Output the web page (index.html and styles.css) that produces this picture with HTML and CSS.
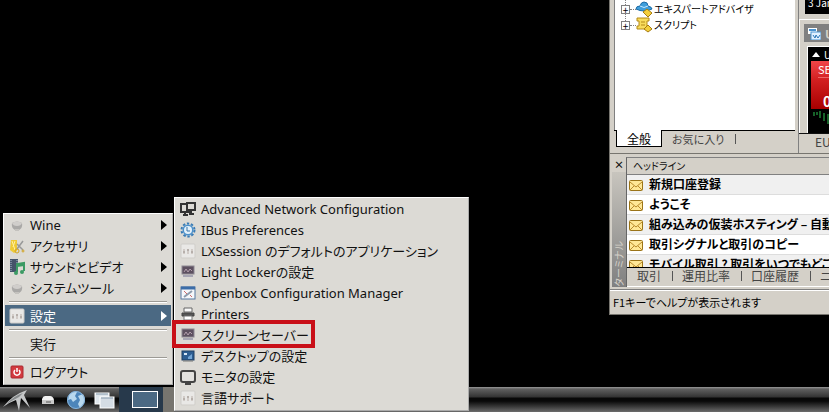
FILE: index.html
```html
<!DOCTYPE html>
<html lang="ja">
<head>
  <meta charset="utf-8">
  <title>デスクトップ</title>
  <link rel="stylesheet" href="styles.css">
</head>
<body>
  <svg class="defs" aria-hidden="true">
    <symbol id="wine" viewBox="0 0 16 16">
      <path d="M3 6Q8 3 13 6Q14 11 10 13H6Q2 11 3 6Z" fill="#aaa9a7"/>
      <path d="M3 6Q8 3 13 6Q12 9 8 9Q4 9 3 6Z" fill="#d0cecb"/>
      <path d="M6 12H10V14H6Z" fill="#c4c2be"/>
    </symbol>
    <symbol id="plain" viewBox="0 0 16 16">
      <rect x="1" y="1" width="14" height="14" rx="1" fill="#e9e8e6" stroke="#cfcdc9"/>
      <path d="M4 6V11M8 6V11M12 6V11" stroke="#b9aea8"/>
      <path d="M3 9H5M7 7H9M11 9H13" stroke="#9c948f"/>
    </symbol>
    <symbol id="screen" viewBox="0 0 16 16">
      <rect x="2" y="2" width="12" height="8" fill="#5d5060" stroke="#8d8792"/>
      <path d="M4 8L6 5L8 8L10 5L12 7" stroke="#b4a0ae" fill="none"/>
      <path d="M3 12H13" stroke="#a8a6b4" stroke-width="2"/>
    </symbol>
    <symbol id="mail" viewBox="0 0 14 11">
      <rect x=".5" y=".5" width="13" height="10" rx="1" fill="#ffe795" stroke="#9b7418"/>
      <path d="M1 2L7 7L13 2M1 10L5 6M13 10L9 6" fill="none" stroke="#b98a2a"/>
    </symbol>
  </svg>

  <main class="desktop">
    <section class="app">
      <div class="app-top">
        <div class="navigator">
          <ul class="tree">
            <li>
              <button type="button" class="expand" aria-label="展開">+</button>
              <svg class="tree-icon" viewBox="0 0 18 16">
                <path d="M1 8Q1 5 5 5Q6 1 9 1Q13 1 13 5Q17 6 17 8Q9 12 1 8Z" fill="#3f9fdc" stroke="#1b6ba6"/>
                <path d="M5 5Q9 8 13 5" fill="none" stroke="#c5e8ff"/>
                <path d="M8 11L12 8L17 12L13 16Z" fill="#f4cf3c" stroke="#a77c10"/>
              </svg>
              <span>エキスパートアドバイザ</span>
            </li>
            <li>
              <button type="button" class="expand" aria-label="展開">+</button>
              <svg class="tree-icon" viewBox="0 0 18 16">
                <path d="M2 1H14V4H12V9H14V12H2V9H4V4H2Z" fill="#f8dc5c" stroke="#b58a18"/>
                <path d="M6 5H10M6 8H10" stroke="#b58a18"/>
                <path d="M9 12L13 8L17 12L13 15Z" fill="#f4cf3c" stroke="#a77c10"/>
              </svg>
              <span>スクリプト</span>
            </li>
          </ul>
          <nav class="tabs">
            <button type="button" class="tab active">全般</button>
            <button type="button" class="tab">お気に入り</button>
          </nav>
        </div>
        <div class="charts">
          <div class="chart-upper">3 Jan 2017</div>
          <div class="chart-window">
            <header class="chart-title">
              <svg class="chart-icon" viewBox="0 0 13 13">
                <rect x="0" y="1" width="9" height="6" fill="#fff"/>
                <path d="M1 3H8" stroke="#4b93cf" stroke-width="2"/>
                <rect x="3" y="5" width="10" height="8" fill="#e2f1ff" stroke="#4b93cf"/>
                <path d="M5 8L7 11L8 8L10 11L12 8" fill="none" stroke="#2d77b8"/>
              </svg>
              <b>USDCHF,H4</b>
            </header>
            <div class="chart">
              <div class="symbol-name"><svg viewBox="0 0 8 5"><path d="M0 5L4 0L8 5Z" fill="#fff"/></svg>USDCHF</div>
              <button type="button" class="sell"><span>SELL</span><b>0</b></button>
              <svg class="bars" viewBox="0 0 20 22"><path d="M2 3V7M5 3V6M8 2V9M12 4V12M16 5V15" stroke="#2fc452"/></svg>
            </div>
          </div>
          <nav class="chart-tabs"><button type="button">EURUSD,H4</button></nav>
        </div>
      </div>

      <div class="terminal">
        <div class="handle">
          <button type="button" class="close" aria-label="閉じる">×</button>
          <div class="grip"><span>ターミナル</span></div>
        </div>
        <div class="terminal-body">
          <div class="news">
            <table>
              <thead><tr><th>ヘッドライン</th></tr></thead>
              <tbody>
                <tr><td><svg><use href="#mail"/></svg>新規口座登録</td></tr>
                <tr><td><svg><use href="#mail"/></svg>ようこそ</td></tr>
                <tr><td><svg><use href="#mail"/></svg>組み込みの仮装ホスティング – 自動売買</td></tr>
                <tr><td><svg><use href="#mail"/></svg>取引シグナルと取引のコピー</td></tr>
                <tr><td><svg><use href="#mail"/></svg>モバイル取引 ? 取引をいつでもどこでも</td></tr>
              </tbody>
            </table>
          </div>
          <nav class="tabs bottom-tabs">
            <button type="button" class="tab">取引</button>
            <button type="button" class="tab">運用比率</button>
            <button type="button" class="tab">口座履歴</button>
            <button type="button" class="tab">ニュース</button>
          </nav>
        </div>
      </div>
      <footer class="status">F1キーでヘルプが表示されます</footer>
    </section>

    <nav class="menu main-menu">
      <button type="button" class="item more"><svg><use href="#wine"/></svg>Wine</button>
      <button type="button" class="item more">
        <svg viewBox="0 0 16 16">
          <path d="M2 2H8V13L5 15L1 12Z" fill="#efca35"/>
          <path d="M3 3L6 12M6 3L4 9" stroke="#fff0a0"/>
          <path d="M14 3L8 11M8 6L14 12" stroke="#999" stroke-width="1.5"/>
          <circle cx="8" cy="13" r="2" fill="none" stroke="#d2a31e"/>
          <circle cx="14" cy="13" r="1" fill="none" stroke="#d2a31e"/>
        </svg>アクセサリ
      </button>
      <button type="button" class="item more">
        <svg viewBox="0 0 16 16">
          <rect x="1" y="0" width="8" height="13" fill="#44536a"/>
          <path d="M2 1V12M8 1V12" stroke="#a9b9cc" stroke-dasharray="1 1"/>
          <path d="M8 13V5L15 4V12M8 7L15 6" fill="none" stroke="#3b9a64" stroke-width="2"/>
          <circle cx="7" cy="14" r="2" fill="#3b9a64"/>
          <circle cx="13" cy="13" r="2" fill="#3b9a64"/>
        </svg>サウンドとビデオ
      </button>
      <button type="button" class="item more"><svg><use href="#wine"/></svg>システムツール</button>
      <hr>
      <button type="button" class="item more selected"><svg><use href="#plain"/></svg>設定</button>
      <hr>
      <button type="button" class="item"><svg></svg>実行</button>
      <hr>
      <button type="button" class="item">
        <svg viewBox="0 0 16 16">
          <rect x="2" y="2" width="12" height="12" rx="1" fill="#d33a3f" stroke="#a92b31"/>
          <path d="M6 6A3 3 0 1 0 10 6M8 4V8" fill="none" stroke="#fff" stroke-width="1.5"/>
        </svg>ログアウト
      </button>
    </nav>

    <nav class="menu sub-menu">
      <button type="button" class="item">
        <svg viewBox="0 0 16 16">
          <path d="M9 10V11H1V3H6M3 14H8M5 11V14" fill="none" stroke="#333" stroke-width="2"/>
          <rect x="7" y="2" width="8" height="7" fill="#dcdad5" stroke="#333" stroke-width="2"/>
          <path d="M11 9V12M9 13H14" stroke="#333" stroke-width="2"/>
        </svg>Advanced Network Configuration
      </button>
      <button type="button" class="item">
        <svg viewBox="0 0 16 16">
          <circle cx="8" cy="8" r="6.5" fill="none" stroke="#397bb5" stroke-width="2" stroke-dasharray="2.4 1.7"/>
          <circle cx="8" cy="8" r="5.5" fill="#4d91cb"/>
          <circle cx="8" cy="8" r="4" fill="#e3f0fa"/>
          <path d="M7 5V9H10" fill="none" stroke="#3974a8"/>
        </svg>IBus Preferences
      </button>
      <button type="button" class="item"><svg><use href="#plain"/></svg>LXSession のデフォルトのアプリケーション</button>
      <button type="button" class="item"><svg><use href="#screen"/></svg>Light Lockerの設定</button>
      <button type="button" class="item">
        <svg viewBox="0 0 16 16">
          <rect x="1" y="2" width="14" height="12" fill="#f5f7fa" stroke="#55779f"/>
          <path d="M1 3H15" stroke="#3c6da8" stroke-width="3"/>
          <path d="M4 12L12 6" stroke="#8d9bac" stroke-width="2"/>
          <path d="M4 6L7 9M10 10L12 12" stroke="#cf6b6b"/>
        </svg>Openbox Configuration Manager
      </button>
      <button type="button" class="item">
        <svg viewBox="0 0 16 16">
          <path d="M4 2H12V6H4Z" fill="#f8f8f8" stroke="#666"/>
          <path d="M2 7H14V10H2Z" fill="#555" stroke="#444"/>
          <path d="M4 10H12V14H4Z" fill="#fff" stroke="#777"/>
        </svg>Printers
      </button>
      <button type="button" class="item marked"><svg><use href="#screen"/></svg>スクリーンセーバー</button>
      <button type="button" class="item">
        <svg viewBox="0 0 16 16">
          <rect x="2" y="3" width="12" height="9" fill="#2d5e92" stroke="#1f3f63"/>
          <path d="M4 5H7V7H4Z" fill="#d9e8f6"/>
          <path d="M8 9L12 6V11H8Z" fill="#73a5d5"/>
          <path d="M3 13H13" stroke="#777"/>
        </svg>デスクトップの設定
      </button>
      <button type="button" class="item">
        <svg viewBox="0 0 16 16">
          <rect x="1" y="2" width="14" height="11" rx="2" fill="#e2e1de" stroke="#444" stroke-width="2"/>
          <path d="M5 15H11" stroke="#444" stroke-width="2"/>
        </svg>モニタの設定
      </button>
      <button type="button" class="item"><svg><use href="#plain"/></svg>言語サポート</button>
    </nav>
  </main>

  <footer class="taskbar">
    <button type="button" class="launch start" aria-label="メニュー">
      <svg viewBox="0 0 30 24">
        <path d="M1 19Q10 7 25 2L22 7L28 20L19 10L17 23L14 12Q8 14 1 19Z" fill="#c5c7c8"/>
        <path d="M4 16Q12 8 21 5L17 9Z" fill="#85898b"/>
      </svg>
    </button>
    <button type="button" class="launch" aria-label="ファイルマネージャ">
      <svg viewBox="0 0 24 24"><path d="M6 11Q7 8 9 8H14Q17 8 18 12V16H6Z" fill="#f2f2f2"/><path d="M6 12H18V16H6Z" fill="#c9c9c9"/><path d="M10 14H15" stroke="#555"/></svg>
    </button>
    <button type="button" class="launch globe" aria-label="ウェブブラウザ">
      <svg viewBox="0 0 24 24"><circle cx="12" cy="12" r="9" fill="#4c85ba"/><path d="M5 7Q9 2 13 4L11 8L13 11L9 14L7 11L4 12ZM14 8L19 6Q22 11 20 15L16 20L14 16L16 12Z" fill="#b8d8ee"/><circle cx="12" cy="12" r="8.5" fill="none" stroke="#88b3d8"/></svg>
    </button>
    <button type="button" class="launch" aria-label="全ウィンドウを最小化">
      <svg viewBox="0 0 24 24"><rect x="3" y="5" width="14" height="11" fill="#dfe6ec" stroke="#fff"/><path d="M4 6H16" stroke="#8397a9"/><rect x="8" y="9" width="14" height="11" fill="#d4dce4" stroke="#fff"/><path d="M9 10H21" stroke="#8397a9"/></svg>
    </button>
    <button type="button" class="pager" aria-label="デスクトップ 1"><span></span></button>
    <div class="divider"></div>
  </footer>
</body>
</html>
```

FILE: styles.css
```css
*, *::before, *::after {
  box-sizing: border-box;
}
body {
  margin: 0;
  height: 100vh;
  display: flex;
  flex-direction: column;
  overflow: hidden;
  position: relative;
  background: #000;
  color: #111;
  font-family: "Noto Sans", "Noto Sans CJK JP", sans-serif;
  font-size: 13px;
  font-feature-settings: "palt";
}
button {
  margin: 0;
  padding: 0;
  border: 0;
  background: none;
  color: inherit;
  font: inherit;
  font-feature-settings: inherit;
  white-space: nowrap;
}
.defs {
  display: none;
}
.desktop {
  flex: 1;
  min-height: 0;
}

/* Trading window */
.app {
  position: absolute;
  left: 609px;
  right: 0;
  top: 0;
  display: flex;
  flex-direction: column;
  overflow: hidden;
  border-left: 1px solid #77756f;
  background: #d4d0c8;
  font-family: "Noto Sans CJK JP", sans-serif;
  font-size: 12px;
}
.app-top {
  display: flex;
  height: 154px;
  border-bottom: 1px solid #77756f;
}
.navigator {
  flex: 0 0 189px;
  display: flex;
  flex-direction: column;
  padding: 0 3px 5px 4px;
  border-right: 1px solid #808080;
}
.tree {
  flex: 1;
  margin: 0;
  padding: 0 0 0 6px;
  list-style: none;
  background: #fff;
  border-left: 1px solid #808080;
  border-right: 1px solid #fff;
}
.tree li {
  display: flex;
  align-items: center;
  height: 16px;
  line-height: 16px;
  white-space: nowrap;
  color: #000;
  font-size: 10px;
}
.tree li:first-child {
  margin-top: 1px;
}
.expand {
  position: relative;
  display: flex;
  align-items: center;
  justify-content: center;
  width: 9px;
  height: 9px;
  border: 1px solid #808080;
  line-height: 7px;
  font-size: 10px;
}
/* dotted branch lines */
.expand::before,
.expand::after {
  content: "";
  position: absolute;
}
.expand::before {
  left: 3px;
  bottom: 8px;
  height: 7px;
  border-left: 1px dotted #808080;
}
.expand::after {
  left: 8px;
  top: 3px;
  width: 6px;
  border-top: 1px dotted #808080;
}
.tree-icon {
  width: 18px;
  height: 16px;
  margin: 0 1px 0 5px;
}
.tabs {
  display: flex;
  height: 18px;
  border-top: 1px solid #000;
  color: #444;
}
.tab {
  display: flex;
  align-items: center;
  height: 15px;
  padding: 0 10px;
}
.tab.active {
  height: 17px;
  margin: -1px 0 0 2px;
  border: 1px solid #000;
  border-top: 0;
  background: #fff;
  color: #000;
}
.tab:not(.active)::after {
  content: "";
  height: 10px;
  margin-left: 11px;
  margin-right: -11px;
  border-right: 1px solid #555;
}
.navigator .tab:not(.active) {
  font-size: 11px;
}
.charts {
  flex: 1;
  min-width: 0;
  display: flex;
  flex-direction: column;
  overflow: hidden;
  white-space: nowrap;
}
.chart-upper {
  height: 14px;
  margin-left: 6px;
  padding-left: 3px;
  background: #000;
  color: #fff;
  font-size: 10px;
  line-height: 6px;
}
.chart-window {
  flex: 1;
  display: flex;
  flex-direction: column;
  margin-top: 5px;
  padding: 4px 0 0 4px;
  border-top: 1px solid #fff;
  border-left: 1px solid #fff;
}
.chart-title {
  display: flex;
  align-items: center;
  gap: 4px;
  height: 18px;
  padding-left: 4px;
  background: #808080;
  color: #d4d0c8;
}
.chart-icon {
  flex: none;
  width: 13px;
  height: 13px;
}
.chart {
  flex: 1;
  margin: 4px 0 0 3px;
  overflow: hidden;
  border-top: 1px solid #fff;
  border-left: 1px solid #fff;
  background: #000;
  color: #fff;
  font-size: 10px;
}
.symbol-name {
  display: flex;
  align-items: center;
  gap: 4px;
  height: 14px;
  padding-left: 4px;
}
.symbol-name svg {
  flex: none;
  width: 8px;
  height: 5px;
}
.sell {
  display: flex;
  flex-direction: column;
  justify-content: space-between;
  width: 80px;
  height: 48px;
  margin-left: 3px;
  padding: 0 10px 0 7px;
  background: linear-gradient(#f04548, #d21f20 40%, #a90000);
  color: #fff;
  text-align: left;
  font-size: 11px;
  line-height: 16px;
}
.sell span {
  border-bottom: 1px solid #e66;
}
.sell b {
  padding-left: 5px;
  font-size: 14px;
}
.bars {
  display: block;
  width: 20px;
  height: 22px;
  margin-left: 4px;
}
.chart-tabs {
  height: 20px;
  padding-left: 16px;
  border-top: 1px solid #111;
  color: #444;
  line-height: 16px;
}

.terminal {
  display: flex;
  height: 136px;
  padding: 3px 0 2px 2px;
  border-bottom: 1px solid #808080;
}
.handle {
  flex: 0 0 14px;
  display: flex;
  flex-direction: column;
}
.close {
  height: 15px;
  line-height: 14px;
  font-size: 10px;
  font-weight: 700;
}
.grip {
  flex: 1;
  display: flex;
  align-items: flex-end;
  background: linear-gradient(#c8c5be, #808080);
  color: #d4d0c8;
  font-size: 10px;
  line-height: 14px;
}
.grip span {
  writing-mode: vertical-rl;
  text-orientation: sideways;
  transform: rotate(180deg);
}
.terminal-body {
  flex: 1;
  min-width: 0;
  display: flex;
  flex-direction: column;
  border-left: 1px solid #666;
  border-top: 1px solid #808080;
}
.news {
  flex: 1;
  min-height: 0;
  overflow: hidden;
  background: #fff;
}
.news table {
  width: 100%;
  border-collapse: collapse;
  white-space: nowrap;
}
.news th {
  height: 16px;
  padding: 0 6px;
  background: #d4d0c8;
  border-bottom: 1px solid #808080;
  text-align: left;
  font-weight: 400;
  font-size: 10px;
  line-height: 15px;
}
.news td {
  height: 20px;
  padding: 0 2px;
  border-bottom: 1px solid #ddd;
  color: #000;
  font-weight: 700;
  font-size: 12px;
  line-height: 18px;
}
.news tr:nth-child(odd) td {
  background: #f0f0f0;
}
.news svg {
  width: 14px;
  height: 11px;
  margin-right: 6px;
  vertical-align: -2px;
}
.bottom-tabs {
  height: 20px;
  overflow: hidden;
  border-bottom: 1px solid #fff;
}
.status {
  height: 25px;
  padding-left: 3px;
  border-top: 1px solid #fff;
  border-bottom: 1px solid #77756f;
  color: #000;
  font-size: 11px;
  line-height: 22px;
}

/* Menus */
.menu {
  position: absolute;
  border: 1px solid #fff;
  border-right-color: #aaa;
  border-bottom-color: #aaa;
  background: #dcdad5;
}
.main-menu {
  left: 3px;
  bottom: 27px;
  width: 170px;
  padding: 0 1px 2px;
}
.sub-menu {
  left: 174px;
  bottom: 1px;
  width: 295px;
  padding: 0 1px 2px;
}
.item {
  position: relative;
  display: flex;
  align-items: center;
  gap: 5px;
  width: 100%;
  height: 21px;
  padding-left: 4px;
  line-height: 20px;
}
.item svg {
  flex: none;
  width: 16px;
  height: 16px;
}
.more::after {
  content: "";
  margin: 0 4px 0 auto;
  border: 5px solid transparent;
  border-left: 6px solid #000;
  border-right: 0;
}
.selected {
  background: #4b6983;
  color: #fff;
}
.selected::after {
  border-left-color: #fff;
}
.menu hr {
  height: 2px;
  margin: 3px 4px 2px;
  border: 0;
  border-top: 1px solid #9c9a95;
  border-bottom: 1px solid #fff;
}
.marked::before {
  content: "";
  position: absolute;
  left: -4px;
  top: -4px;
  width: 143px;
  height: 28px;
  border: 4px solid #c90f18;
}

/* Taskbar */
.taskbar {
  display: flex;
  height: 25px;
  background: linear-gradient(#999 0, #606060 2px, #333 10px, #080808 11px, #080808 14px, #333 19px, #6c6c6c);
}
.launch {
  width: 30px;
}
.launch svg {
  display: block;
  width: 24px;
  height: 24px;
  margin: 0 auto;
}
.start {
  width: 33px;
}
.start svg {
  width: 30px;
}
.globe {
  width: 26px;
}
.pager {
  display: flex;
  align-items: center;
  justify-content: center;
  width: 44px;
  padding-left: 7px;
  background: #27394b;
}
.pager span {
  width: 26px;
  height: 17px;
  border: 1px solid #fff;
  background: #4b6983;
}
.divider {
  width: 11px;
  background: #77756f;
}
```
